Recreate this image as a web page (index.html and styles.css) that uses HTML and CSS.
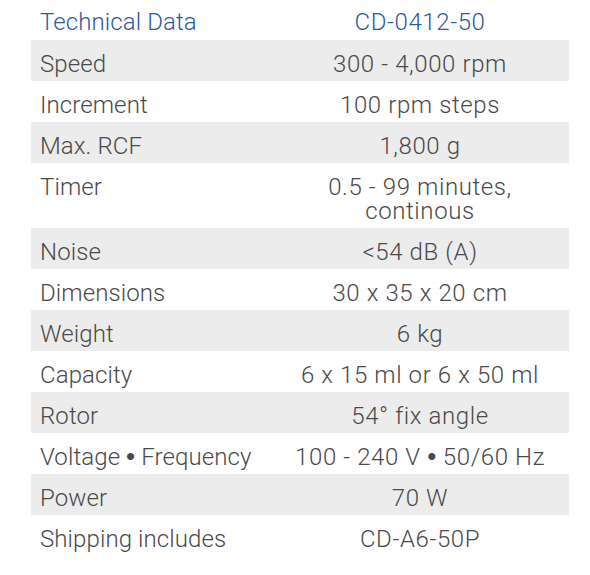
FILE: index.html
```html
<!DOCTYPE html>
<html>
<head>
<meta charset="utf-8">
<link rel="stylesheet" href="styles.css">
</head>
<body>
<table class="spec">
  <thead>
    <tr class="head"><th class="k">Technical Data</th><th class="v">CD-0412-50</th></tr>
  </thead>
  <tbody>
    <tr class="alt"><td class="k">Speed</td><td class="v">300 - 4,000 rpm</td></tr>
    <tr><td class="k">Increment</td><td class="v">100 rpm steps</td></tr>
    <tr class="alt"><td class="k">Max. RCF</td><td class="v">1,800 g</td></tr>
    <tr><td class="k">Timer</td><td class="v">0.5 - 99 minutes,<br>continous</td></tr>
    <tr class="alt"><td class="k">Noise</td><td class="v">&lt;54 dB (A)</td></tr>
    <tr><td class="k">Dimensions</td><td class="v">30 x 35 x 20 cm</td></tr>
    <tr class="alt"><td class="k">Weight</td><td class="v">6 kg</td></tr>
    <tr><td class="k">Capacity</td><td class="v">6 x 15 ml or 6 x 50 ml</td></tr>
    <tr class="alt"><td class="k">Rotor</td><td class="v">54° fix angle</td></tr>
    <tr><td class="k">Voltage <span class="dot">•</span> Frequency</td><td class="v">100 - 240 V <span class="dot">•</span> 50/60 Hz</td></tr>
    <tr class="alt"><td class="k">Power</td><td class="v">70 W</td></tr>
    <tr><td class="k">Shipping includes</td><td class="v">CD-A6-50P</td></tr>
  </tbody>
</table>
</body>
</html>
```
FILE: styles.css
```css
html, body {
  margin: 0;
  padding: 0;
  background: #ffffff;
}
body {
  font-family: Roboto, "Liberation Sans", Arial, sans-serif;
  font-weight: 300;
  font-size: 24px;
  color: #4a4a4a;
}
.spec {
  margin-left: 31px;
  width: 538px;
  border-collapse: collapse;
  table-layout: fixed;
}
.spec th,
.spec td {
  font-weight: 300;
  line-height: 24px;
  padding: 12px 0 5px 0;
  vertical-align: top;
}
.spec .k {
  width: 231px;
  padding-left: 9px;
  text-align: left;
  letter-spacing: 0.1px;
}
.spec .v {
  text-align: center;
  letter-spacing: 0.6px;
}
.spec .head th {
  color: #2e5a9a;
  padding-top: 10px;
  padding-bottom: 6px;
}
.spec .alt {
  background: #ececec;
}
.dot {
  font-family: "Liberation Sans", Arial, sans-serif;
  font-weight: 400;
  font-size: 26px;
  line-height: 0;
  letter-spacing: 0;
}
```
